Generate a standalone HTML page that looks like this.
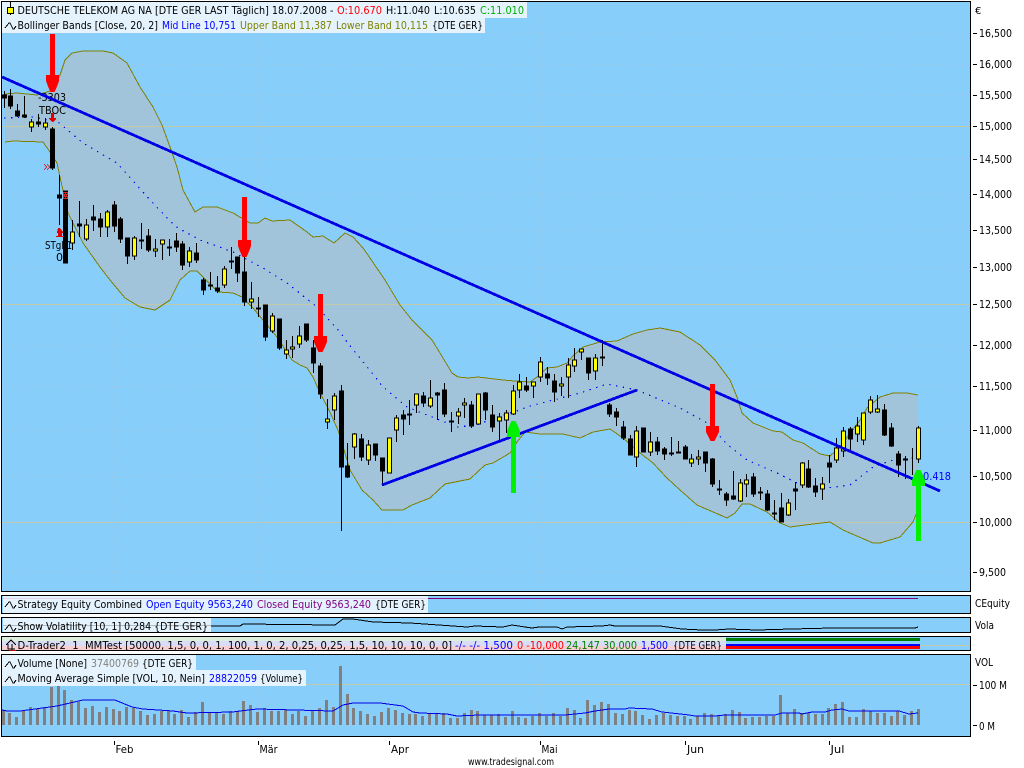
<!DOCTYPE html>
<html><head><meta charset="utf-8"><title>Chart</title>
<style>
html,body{margin:0;padding:0;background:#fff;width:1024px;height:768px;overflow:hidden}
svg{display:block;position:absolute;left:0;top:0}
text{font-family:"DejaVu Sans","Liberation Sans",sans-serif;font-size:11px;fill:#000}
</style></head><body>
<svg width="1024" height="768" viewBox="0 0 1024 768" xmlns="http://www.w3.org/2000/svg">
<rect width="1024" height="768" fill="#fff"/>
<!-- panes -->
<g fill="#87CEFA" stroke="#000" shape-rendering="crispEdges">
<rect x="1.5" y="1.5" width="969" height="590"/>
<rect x="1.5" y="595.5" width="969" height="18"/>
<rect x="1.5" y="617.5" width="969" height="15"/>
<rect x="1.5" y="636.5" width="969" height="14"/>
<rect x="1.5" y="654.5" width="969" height="82"/>
</g>
<!-- band fill -->
<path fill="#A2C4DB" d="M5 94L17 93L37 95L47 92L53 90L60 75L65 60L72 53L83 51L103 51L113 53L127 63L140 87L153 107L162 125L170 147L177 167L183 190L195 212L203 207L217 207L233 213L250 223L258 223L265 218L272 221L290 220L307 232L313 237L323 236L334 243L345 233L353 237L363 248L370 258L385 280L400 305L412 320L422 330L432 340L440 353L452 373L458 377L468 378L478 377L503 380L515 381L530 382L537 377L547 368L557 367L567 363L573 356L583 347L600 342L617 341L633 334L647 330L660 328L680 332L700 345L715 360L730 380L737 397L742 413L753 423L773 431L782 432L793 440L803 443L820 454L830 456L840 447L860 420L867 408L880 397L893 393L907 393L918 395L919 507L913 522L900 537L880 543L873 543L843 530L830 522L813 524L790 527L780 523L767 512L750 504L742 504L735 513L727 518L697 505L680 490L667 478L653 463L640 453L623 438L610 429L593 432L580 438L563 434L540 434L525 432L517 442L510 453L493 463L485 465L470 479L445 484L430 498L412 505L403 510L382 510L373 500L362 490L350 470L345 453L338 430L328 408L320 393L313 377L307 368L300 365L292 360L277 337L263 320L253 308L242 297L233 293L218 292L203 277L197 271L190 271L180 280L170 300L155 310L140 307L125 298L110 280L100 267L83 243L68 213L60 177L57 163L50 152L43 142L13 141L5 142Z"/>
<!-- solid tan lines -->
<g stroke="#C2C9A6" shape-rendering="crispEdges" fill="none">
<path d="M2 126.5H970M2 304.5H970M2 522.5H970M2 645.5H970M2 684.5H970"/>
</g>
<!-- dotted grid -->
<g stroke="#A9C4D6" fill="none" stroke-dasharray="1 4" shape-rendering="crispEdges">
<path d="M2 33.5H970M2 64.5H970M2 95.5H970M2 159.5H970M2 194.5H970M2 230.5H970M2 267.5H970M2 345.5H970M2 386.5H970M2 430.5H970M2 476.5H970M2 572.5H970"/>
<path d="M114.5 2V591M258.5 2V591M389.5 2V591M540.5 2V591M685.5 2V591M829.5 2V591"/>
<path d="M114.5 596V613M258.5 596V613M389.5 596V613M540.5 596V613M685.5 596V613M829.5 596V613M114.5 618V632M258.5 618V632M389.5 618V632M540.5 618V632M685.5 618V632M829.5 618V632M114.5 655V736M258.5 655V736M389.5 655V736M540.5 655V736M685.5 655V736M829.5 655V736"/>
</g>
<!-- bollinger lines -->
<g fill="none" stroke="#808000" stroke-width="1" shape-rendering="crispEdges">
<path d="M5 94L17 93L37 95L47 92L53 90L60 75L65 60L72 53L83 51L103 51L113 53L127 63L140 87L153 107L162 125L170 147L177 167L183 190L195 212L203 207L217 207L233 213L250 223L258 223L265 218L272 221L290 220L307 232L313 237L323 236L334 243L345 233L353 237L363 248L370 258L385 280L400 305L412 320L422 330L432 340L440 353L452 373L458 377L468 378L478 377L503 380L515 381L530 382L537 377L547 368L557 367L567 363L573 356L583 347L600 342L617 341L633 334L647 330L660 328L680 332L700 345L715 360L730 380L737 397L742 413L753 423L773 431L782 432L793 440L803 443L820 454L830 456L840 447L860 420L867 408L880 397L893 393L907 393L918 395"/>
<path d="M5 142L13 141L43 142L50 152L57 163L60 177L68 213L83 243L100 267L110 280L125 298L140 307L155 310L170 300L180 280L190 271L197 271L203 277L218 292L233 293L242 297L253 308L263 320L277 337L292 360L300 365L307 368L313 377L320 393L328 408L338 430L345 453L350 470L362 490L373 500L382 510L403 510L412 505L430 498L445 484L470 479L485 465L493 463L510 453L517 442L525 432L540 434L563 434L580 438L593 432L610 429L623 438L640 453L653 463L667 478L680 490L697 505L727 518L735 513L742 504L750 504L767 512L780 523L790 527L813 524L830 522L843 530L873 543L880 543L900 537L913 522L919 507"/>
</g>
<!-- mid line dotted -->
<path fill="none" stroke="#0000FF" stroke-width="1.2" stroke-dasharray="1.4 5.5" shape-rendering="crispEdges" d="M4 118L33 117L58 122L83 143L117 163L150 200L170 221L178 228L200 240L233 252L263 268L287 283L317 307L340 332L347 342L372 373L383 387L407 407L437 419L457 427L477 425L497 417L520 410L527 407L553 400L580 393L607 384L637 390L680 408L707 423L728 445L747 460L777 473L797 483L827 488L850 485L873 467L893 460L913 458"/>
<!-- chart annotations -->
<text x="38" y="101" textLength="28" lengthAdjust="spacingAndGlyphs">-3303</text>
<text x="39" y="114" textLength="27" lengthAdjust="spacingAndGlyphs">TBOC</text>
<text x="45" y="249" textLength="27" lengthAdjust="spacingAndGlyphs">STgl 1</text>
<text x="56" y="261">0</text>
<!-- candles -->
<g transform="translate(.5 0)" shape-rendering="crispEdges" stroke="#000" stroke-width="1">
<path fill="none" d="M4 91V108M10 89V109M17 104V117M24 96V118M31 119V132M38 114V127M45 118V130M52 127V170M59 175V225M65 191V263M72 220V250M79 201V237M86 219V241M93 205V231M100 213V237M107 210V237M114 201V232M120 217V243M127 238V264M134 236V260M141 223V249M148 229V252M155 239V257M162 240V260M169 239V256M176 233V252M182 241V270M189 247V267M196 243V263M203 278V295M210 272V290M217 276V293M224 266V288M231 247V269M237 257V282M244 257V306M251 282V309M258 297V317M265 305V341M272 313V333M279 319V350M286 340V359M292 336V358M299 326V348M306 324V342M313 340V373M320 363V399M327 399V429M334 393V420M341 385V531M347 443V478M354 433V459M361 434V461M368 440V465M375 444V461M382 458V486M389 438V473M396 415V442M403 410V435M409 400V425M416 394V413M423 392V407M430 380V408M437 392V420M444 383V417M451 412V432M458 408V424M464 398V418M471 401V428M478 394V424M485 392V420M492 405V432M499 413V440M506 410V433M513 385V415M519 374V398M526 377V392M533 382V398M540 357V382M547 367V385M554 374V402M561 377V396M568 358V398M574 348V372M581 349V360M588 358V380M595 354V380M602 340V366M609 403V417M616 408V426M623 421V440M630 435V455M636 426V467M643 428V452M650 432V456M657 437V455M664 447V460M671 437V456M678 441V453M685 445V459M691 454V467M698 450V465M705 452V472M712 458V487M719 480V495M726 492V506M733 471V500M740 479V502M746 474V497M753 473V497M760 487V500M767 490V511M774 500V520M781 493V522M788 499V516M795 482V510M802 462V488M808 460V488M815 478V497M822 477V500M829 455V483M836 438V463M843 427V457M850 427V452M857 417V442M863 413V445M870 396V414M877 395V413M884 404V436M891 423V447M898 451V477M905 456V479M912 448V475M918 426V463"/>
<path fill="#000" d="M2 95h4V98h-4zM8 96h4V106h-4zM15 111h4V116h-4zM22 115h4V117h-4zM36 122h4V124h-4zM50 129h4V168h-4zM57 195h4V198h-4zM63 191h4V263h-4zM77 224h4V226h-4zM91 217h4V220h-4zM98 219h4V227h-4zM112 205h4V226h-4zM118 219h4V239h-4zM125 238h4V256h-4zM139 240h4V241h-4zM146 236h4V250h-4zM167 247h4V248h-4zM174 241h4V247h-4zM180 244h4V265h-4zM194 253h4V260h-4zM201 280h4V290h-4zM208 285h4V286h-4zM215 288h4V291h-4zM229 261h4V262h-4zM235 257h4V273h-4zM242 272h4V302h-4zM256 308h4V309h-4zM263 305h4V337h-4zM277 319h4V348h-4zM304 324h4V340h-4zM311 348h4V363h-4zM318 366h4V394h-4zM339 391h4V467h-4zM345 466h4V477h-4zM359 439h4V457h-4zM373 444h4V455h-4zM380 458h4V471h-4zM401 415h4V419h-4zM407 414h4V415h-4zM421 396h4V403h-4zM435 393h4V395h-4zM442 390h4V414h-4zM449 421h4V422h-4zM469 405h4V426h-4zM483 393h4V410h-4zM490 415h4V427h-4zM524 386h4V390h-4zM545 374h4V378h-4zM552 381h4V392h-4zM586 358h4V373h-4zM600 357h4V358h-4zM607 405h4V414h-4zM614 412h4V417h-4zM621 427h4V438h-4zM628 439h4V455h-4zM641 428h4V452h-4zM655 442h4V451h-4zM662 449h4V454h-4zM669 453h4V454h-4zM676 452h4V453h-4zM683 447h4V459h-4zM703 452h4V463h-4zM710 459h4V484h-4zM717 489h4V490h-4zM724 494h4V500h-4zM731 496h4V499h-4zM751 477h4V494h-4zM758 492h4V493h-4zM765 494h4V510h-4zM772 513h4V514h-4zM779 508h4V522h-4zM793 489h4V491h-4zM806 469h4V487h-4zM813 486h4V492h-4zM827 463h4V467h-4zM848 429h4V439h-4zM882 410h4V435h-4zM889 428h4V446h-4zM896 454h4V465h-4zM903 459h4V460h-4z"/>
<path fill="#FFFF00" d="M29 122h4V127h-4zM43 123h4V127h-4zM70 232h4V243h-4zM84 225h4V239h-4zM105 212h4V227h-4zM132 238h4V256h-4zM153 249h4V251h-4zM160 240h4V244h-4zM187 251h4V262h-4zM222 269h4V285h-4zM249 299h4V302h-4zM270 316h4V331h-4zM284 350h4V354h-4zM290 347h4V349h-4zM297 336h4V344h-4zM325 419h4V422h-4zM332 396h4V410h-4zM352 434h4V447h-4zM366 445h4V460h-4zM387 438h4V473h-4zM394 418h4V430h-4zM414 394h4V405h-4zM428 398h4V406h-4zM456 412h4V416h-4zM462 403h4V405h-4zM476 394h4V424h-4zM497 417h4V421h-4zM504 413h4V420h-4zM511 391h4V414h-4zM517 382h4V390h-4zM531 382h4V386h-4zM538 362h4V377h-4zM559 384h4V386h-4zM566 365h4V377h-4zM572 360h4V366h-4zM579 349h4V352h-4zM593 358h4V371h-4zM634 431h4V457h-4zM648 442h4V452h-4zM689 459h4V463h-4zM696 457h4V459h-4zM738 483h4V501h-4zM744 480h4V484h-4zM786 503h4V515h-4zM800 463h4V485h-4zM820 484h4V489h-4zM834 448h4V460h-4zM841 431h4V451h-4zM855 426h4V434h-4zM861 413h4V440h-4zM868 400h4V412h-4zM875 409h4V412h-4zM916 428h4V459h-4z"/>
</g>
<!-- trend lines -->
<g stroke="#0000E6" stroke-width="2.8" fill="none" shape-rendering="crispEdges">
<path d="M2 77L940 491"/>
<path d="M382 485L637 390"/>
</g>
<text x="923" y="480" style="fill:#0000FF" textLength="28" lengthAdjust="spacingAndGlyphs">0.418</text>
<!-- small markers -->
<g fill="#E00000" shape-rendering="crispEdges">
<path d="M51 113h3v5h2v1l-2 2-1 1h-1l-2-2-1-1v-1h2z"/>
<path d="M58 229h2l3 4v1h-1v3h2v1h-8v-1h2v-3h-1v-1z" transform="translate(0 -1)"/>
<path d="M44 165l2 2-2 2v1l3-3-3-3zM47 165l2 2-2 2v1l3-3-3-3z"/>
<path d="M63 192h5v7h-5z" fill="#E02020"/>
</g>
<path fill="#000" d="M64 193h1v1h-1zM66 193h1v1h-1zM65 195h1v1h-1zM67 195h1v1h-1zM64 197h1v1h-1zM66 197h1v1h-1z" shape-rendering="crispEdges"/>
<!-- red arrows -->
<g fill="#FF0000">
<path d="M50 34h5V75h4V81Q57 87 54.500 92H50.500Q48 87 46 81V75h4z"/>
<path d="M242 197h5V240h4V246Q249 252 246.500 257H242.500Q240 252 238 246V240h4z"/>
<path d="M318 294h5V336h4V342Q325 347 322.500 352H318.500Q316 347 314 342V336h4z"/>
<path d="M710 384h5V426h4V432Q717 436 714.500 441H710.500Q708 436 706 432V426h4z"/>
</g>
<!-- green arrows -->
<g fill="#00F000">
<path d="M511 493H516V437H520V431Q518 426 515.500 421H511.500Q509 426 507 431V437H511z"/>
<path d="M916 541H921V486H925V480Q923 475 920.500 470H916.500Q914 475 912 480V486H916z"/>
</g>
<!-- strategy / vola lines -->
<path d="M428 598.5H918" stroke="#800080" fill="none" shape-rendering="crispEdges"/>
<path fill="none" stroke="#000" shape-rendering="crispEdges" d="M211 626L240 626L243 624L335 625L343 619L353 619L373 622L410 623L453 626L467 627L475 626L503 627L512 625L525 627L532 628L539 627L557 627L562 629L567 627L602 626L610 625L615 626L660 626L682 629L702 630L715 630L729 629L757 630L792 629L832 628L915 628L918 627"/>
<!-- dtrader lines -->
<g shape-rendering="crispEdges">
<rect x="726" y="638" width="194" height="3" fill="#008000"/>
<rect x="726" y="644" width="194" height="2" fill="#0000FF"/>
<rect x="726" y="646" width="194" height="3" fill="#FF0000"/>
</g>
<!-- volume bars -->
<path fill="none" stroke="#808080" stroke-width="3" shape-rendering="crispEdges" d="M3.500 725V710M9.500 725V713M16.500 725V717M23.500 725V711M30.500 725V707M37.500 725V709M44.500 725V707M51.500 725V687M58.500 725V685M64.500 725V690M71.500 725V700M78.500 725V702M85.500 725V708M92.500 725V706M99.500 725V712M106.500 725V707M113.500 725V709M119.500 725V711M126.500 725V707M133.500 725V708M140.500 725V711M147.500 725V715M154.500 725V714M161.500 725V711M168.500 725V711M174.500 725V714M181.500 725V710M188.500 725V717M195.500 725V712M202.500 725V702M209.500 725V712M216.500 725V713M223.500 725V714M230.500 725V711M237.500 725V711M243.500 725V701M250.500 725V705M257.500 725V712M264.500 725V708M271.500 725V711M278.500 725V711M285.500 725V709M292.500 725V714M298.500 725V711M305.500 725V716M312.500 725V710M319.500 725V708M326.500 725V700M333.500 725V707M340.500 725V666M347.500 725V694M353.500 725V708M360.500 725V711M367.500 725V714M374.500 725V716M381.500 725V712M388.500 725V708M395.500 725V710M402.500 725V713M409.500 725V714M415.500 725V714M422.500 725V716M429.500 725V713M436.500 725V713M443.500 725V713M450.500 725V718M457.500 725V718M464.500 725V713M471.500 725V710M477.500 725V711M484.500 725V715M491.500 725V715M498.500 725V714M505.500 725V717M512.500 725V711M518.500 725V717M525.500 725V718M532.500 725V716M539.500 725V713M546.500 725V716M553.500 725V713M560.500 725V716M567.500 725V708M574.500 725V710M580.500 725V718M587.500 725V700M594.500 725V705M601.500 725V702M608.500 725V704M615.500 725V713M622.500 725V714M629.500 725V710M635.500 725V711M642.500 725V715M649.500 725V719M656.500 725V715M663.500 725V713M670.500 725V715M677.500 725V716M684.500 725V716M690.500 725V719M697.500 725V716M704.500 725V713M711.500 725V714M718.500 725V716M725.500 725V714M732.500 725V710M739.500 725V712M745.500 725V718M752.500 725V717M759.500 725V717M766.500 725V716M773.500 725V716M780.500 725V695M787.500 725V713M794.500 725V709M801.500 725V713M808.500 725V713M815.500 725V714M822.500 725V714M828.500 725V708M835.500 725V704M842.500 725V702M849.500 725V717M856.500 725V717M863.500 725V709M870.500 725V711M877.500 725V713M884.500 725V713M891.500 725V716M897.500 725V711M904.500 725V715M911.500 725V711M918.500 725V709"/>
<path fill="none" stroke="#0000E6" shape-rendering="crispEdges" d="M2 710L7 711L20 711L50 707L57 706L70 703L83 700L115 700L132 707L143 709L173 711L187 713L233 712L240 711L257 709L333 711L343 705L353 703L380 703L403 706L413 712L420 713L447 714L457 716L480 715L512 715L565 715L585 713L595 711L609 709L625 709L629 708L652 709L662 712L689 715L695 716L715 716L725 715L762 715L775 715L782 713L799 713L802 714L812 712L825 712L832 710L842 709L849 711L899 711L909 714L918 713"/>
<!-- label backgrounds -->
<g fill="#E4F3FD" shape-rendering="crispEdges">
<rect x="2" y="2" width="525" height="16"/>
<rect x="2" y="18" width="483" height="15"/>
<rect x="3" y="596" width="425" height="17"/>
<rect x="3" y="618" width="208" height="14"/>
<rect x="2" y="655" width="194" height="15"/>
<rect x="2" y="670" width="304" height="16"/>
</g>
<g shape-rendering="crispEdges">
<rect x="2" y="637" width="724" height="4" fill="#DCEEDC"/>
<rect x="2" y="641" width="724" height="5" fill="#D9DDF8"/>
<rect x="2" y="646" width="724" height="4" fill="#F8CFD2"/>
<path d="M3 598.500H428" stroke="#E2D2EC"/>
<path d="M3 625.500H211" stroke="#B0BCC6"/>
</g>
<!-- icons -->
<path stroke="#000" d="M10.500 2V15" shape-rendering="crispEdges"/>
<rect x="7.500" y="7.500" width="6" height="6" fill="#FFFF00" stroke="#000" shape-rendering="crispEdges"/>
<g fill="none" stroke="#000" shape-rendering="crispEdges">
<path d="M5 28L9 23L10 23L13 29L14 29L16 26"/>
<path d="M5 607L9 602L10 602L13 608L14 608L16 605"/>
<path d="M5 630L9 625L10 625L13 631L14 631L16 628"/>
<path d="M5 667L9 662L10 662L13 668L14 668L16 665"/>
<path d="M5 682L9 677L10 677L13 683L14 683L16 680"/>
<path d="M6 645L11 640L16 645M8 644V649H15M12 644V650"/>
</g>
<path d="M9 650h7v1h-7z" fill="#C00000" shape-rendering="crispEdges"/>
<!-- label texts -->
<text x="17.500" y="14" textLength="316" lengthAdjust="spacingAndGlyphs">DEUTSCHE TELEKOM AG NA [DTE GER LAST Täglich] 18.07.2008 -</text>
<text x="337" y="14" textLength="45" lengthAdjust="spacingAndGlyphs" style="fill:#FF0000">O:10.670</text>
<text x="386" y="14" textLength="44" lengthAdjust="spacingAndGlyphs">H:11.040</text>
<text x="434" y="14" textLength="42" lengthAdjust="spacingAndGlyphs">L:10.635</text>
<text x="480" y="14" textLength="44" lengthAdjust="spacingAndGlyphs" style="fill:#00B000">C:11.010</text>
<text x="17.500" y="29" textLength="140.500" lengthAdjust="spacingAndGlyphs">Bollinger Bands [Close, 20, 2]</text>
<text x="162" y="29" textLength="74" lengthAdjust="spacingAndGlyphs" style="fill:#0000FF">Mid Line 10,751</text>
<text x="240" y="29" textLength="92" lengthAdjust="spacingAndGlyphs" style="fill:#808000">Upper Band 11,387</text>
<text x="336" y="29" textLength="92" lengthAdjust="spacingAndGlyphs" style="fill:#808000">Lower Band 10,115</text>
<text x="432" y="29" textLength="51" lengthAdjust="spacingAndGlyphs">{DTE GER}</text>

<text x="17.500" y="608" textLength="124.500" lengthAdjust="spacingAndGlyphs">Strategy Equity Combined</text>
<text x="146" y="608" textLength="107" lengthAdjust="spacingAndGlyphs" style="fill:#0000FF">Open Equity 9563,240</text>
<text x="257" y="608" textLength="114" lengthAdjust="spacingAndGlyphs" style="fill:#800080">Closed Equity 9563,240</text>
<text x="375" y="608" textLength="51" lengthAdjust="spacingAndGlyphs">{DTE GER}</text>

<text x="17.500" y="630" textLength="190.500" lengthAdjust="spacingAndGlyphs">Show Volatility [10, 1] 0,284 {DTE GER}</text>

<text x="17.500" y="649" textLength="434.500" lengthAdjust="spacingAndGlyphs" xml:space="preserve">D-Trader2  1  MMTest [50000, 1,5, 0, 0, 1, 100, 1, 0, 2, 0,25, 0,25, 1,5, 10, 10, 10, 0, 0]</text>
<text x="455" y="649" textLength="58" lengthAdjust="spacingAndGlyphs" style="fill:#0000FF">-/- -/- 1,500</text>
<text x="517" y="649" textLength="47" lengthAdjust="spacingAndGlyphs" style="fill:#FF0000">0 -10,000</text>
<text x="566" y="649" textLength="71" lengthAdjust="spacingAndGlyphs" style="fill:#008000">24,147 30,000</text>
<text x="641" y="649" textLength="27" lengthAdjust="spacingAndGlyphs" style="fill:#0000FF">1,500</text>
<text x="673" y="649" textLength="49" lengthAdjust="spacingAndGlyphs">{DTE GER}</text>

<text x="17.500" y="667" textLength="69.500" lengthAdjust="spacingAndGlyphs">Volume [None]</text>
<text x="91" y="667" textLength="48" lengthAdjust="spacingAndGlyphs" style="fill:#808080">37400769</text>
<text x="142" y="667" textLength="51" lengthAdjust="spacingAndGlyphs">{DTE GER}</text>
<text x="17.500" y="682" textLength="187.500" lengthAdjust="spacingAndGlyphs">Moving Average Simple [VOL, 10, Nein]</text>
<text x="209" y="682" textLength="48" lengthAdjust="spacingAndGlyphs" style="fill:#0000FF">28822059</text>
<text x="260" y="682" textLength="43" lengthAdjust="spacingAndGlyphs">{Volume}</text>

<!-- axis ticks -->
<path stroke="#000" shape-rendering="crispEdges" fill="none" d="M973 33.500H977M973 64.500H977M973 95.500H977M973 126.500H977M973 159.500H977M973 194.500H977M973 230.500H977M973 267.500H977M973 304.500H977M973 345.500H977M973 386.500H977M973 430.500H977M973 476.500H977M973 522.500H977M973 572.500H977M973 685.500H977M973 725.500H977M114.500 741V745M258.500 741V745M389.500 741V745M540.500 741V745M685.500 741V745M829.500 741V745"/>
<!-- axis labels -->
<text x="975" y="14" style="font-size:10px">€</text>
<g>
<text x="979" y="37" textLength="33" lengthAdjust="spacingAndGlyphs">16,500</text>
<text x="979" y="68" textLength="33" lengthAdjust="spacingAndGlyphs">16,000</text>
<text x="979" y="99" textLength="33" lengthAdjust="spacingAndGlyphs">15,500</text>
<text x="979" y="130" textLength="33" lengthAdjust="spacingAndGlyphs">15,000</text>
<text x="979" y="163" textLength="33" lengthAdjust="spacingAndGlyphs">14,500</text>
<text x="979" y="198" textLength="33" lengthAdjust="spacingAndGlyphs">14,000</text>
<text x="979" y="234" textLength="33" lengthAdjust="spacingAndGlyphs">13,500</text>
<text x="979" y="271" textLength="33" lengthAdjust="spacingAndGlyphs">13,000</text>
<text x="979" y="308" textLength="33" lengthAdjust="spacingAndGlyphs">12,500</text>
<text x="979" y="349" textLength="33" lengthAdjust="spacingAndGlyphs">12,000</text>
<text x="979" y="390" textLength="33" lengthAdjust="spacingAndGlyphs">11,500</text>
<text x="979" y="434" textLength="33" lengthAdjust="spacingAndGlyphs">11,000</text>
<text x="979" y="480" textLength="33" lengthAdjust="spacingAndGlyphs">10,500</text>
<text x="979" y="526" textLength="33" lengthAdjust="spacingAndGlyphs">10,000</text>
<text x="979" y="576" textLength="27" lengthAdjust="spacingAndGlyphs">9,500</text>
<text x="975" y="607" textLength="35" lengthAdjust="spacingAndGlyphs">CEquity</text>
<text x="975" y="629" textLength="19" lengthAdjust="spacingAndGlyphs">Vola</text>
<text x="975" y="666" textLength="18" lengthAdjust="spacingAndGlyphs">VOL</text>
<text x="979" y="689" textLength="28" lengthAdjust="spacingAndGlyphs">100 M</text>
<text x="979" y="730" textLength="16" lengthAdjust="spacingAndGlyphs">0 M</text>
<text x="115.500" y="753" textLength="18" lengthAdjust="spacingAndGlyphs">Feb</text>
<text x="259.500" y="753" textLength="18" lengthAdjust="spacingAndGlyphs">Mär</text>
<text x="391" y="753" textLength="18" lengthAdjust="spacingAndGlyphs">Apr</text>
<text x="541.500" y="753" textLength="16" lengthAdjust="spacingAndGlyphs">Mai</text>
<text x="687" y="753" textLength="17" lengthAdjust="spacingAndGlyphs">Jun</text>
<text x="830.500" y="753" textLength="14" lengthAdjust="spacingAndGlyphs">Jul</text>
<text x="468" y="765" textLength="86" lengthAdjust="spacingAndGlyphs" style="font-size:9.500px">www.tradesignal.com</text>
</g>
</svg>
</body></html>
